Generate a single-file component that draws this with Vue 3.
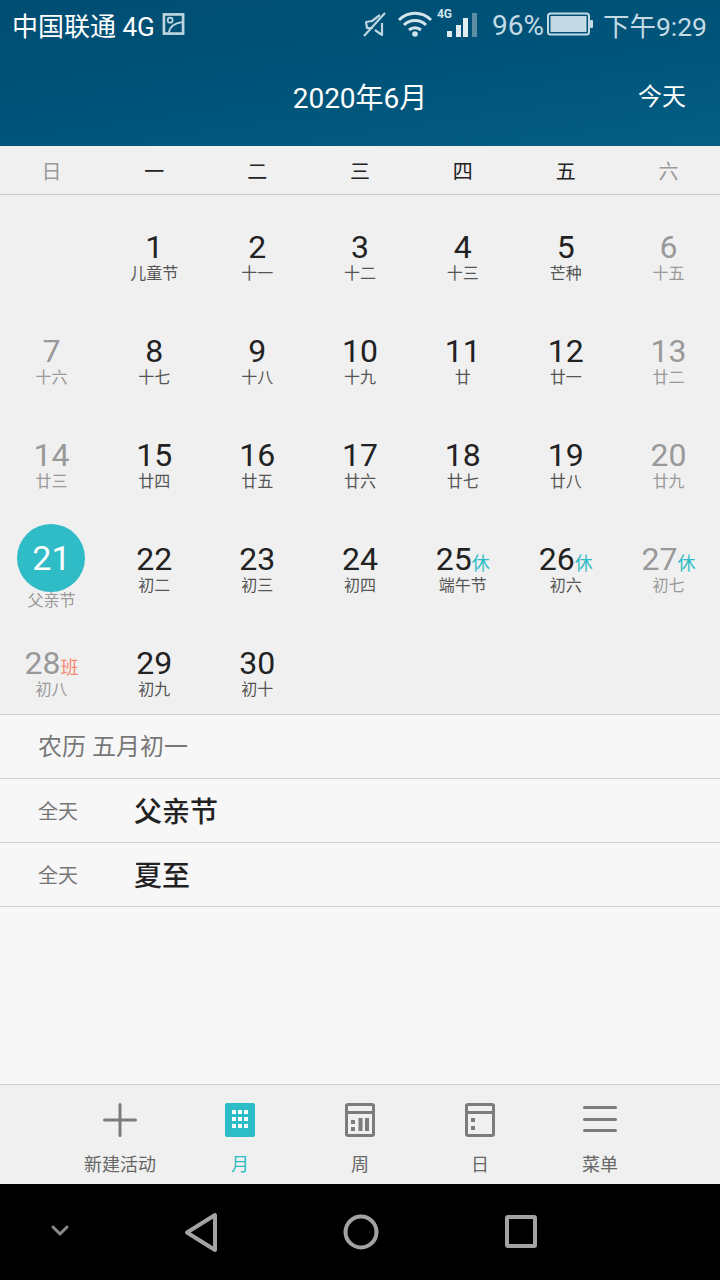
<template>
  <div class="phone">
    <header class="top">
      <div class="status">
        <div class="status-left">
          <span class="carrier">中国联通 4G</span>
          <svg class="ic-image" width="23" height="24" viewBox="0 0 24 24" fill="none" stroke="#bcd5e0" stroke-width="2.8">
            <rect x="2" y="2" width="20" height="20" />
            <circle cx="8.5" cy="8" r="2.6" stroke-width="1.8" />
            <path d="M7 21c1-6 6-10 14-11" stroke-width="2" />
          </svg>
        </div>
        <div class="status-right">
          <svg width="26" height="26" viewBox="0 0 26 26" fill="none" stroke="#bcd5e0" stroke-width="2.2">
            <path d="M21 12v12l-7-5M12 17H6l-1-6 6-1 8-6" stroke-linejoin="round" />
            <path d="M3 25L24 2" />
          </svg>
          <svg class="ic-wifi" width="36" height="26" viewBox="0 0 36 26" fill="none" stroke="#d4e4ec" stroke-width="3">
            <path d="M2 9c9-9 23-9 32 0M7 14c6-6 16-6 22 0M12 19c3.500-3 8.500-3 12 0" />
            <circle cx="18" cy="23" r="2.800" fill="#d4e4ec" stroke="none" />
          </svg>
          <div class="signal">
            <span class="net">4G</span>
            <i class="bar b1"></i><i class="bar b2"></i><i class="bar b3"></i><i class="bar b4"></i>
          </div>
          <span class="pct">96%</span>
          <svg class="ic-batt" width="46" height="24" viewBox="0 0 46 24">
            <rect x="1" y="1.500" width="41" height="21" rx="2.500" fill="none" stroke="#c4dae4" stroke-width="2" />
            <rect x="3.500" y="4" width="36" height="16" fill="#c4dae4" />
            <rect x="43" y="8" width="3" height="8" rx="1" fill="#c4dae4" />
          </svg>
          <span class="clock">下午9:29</span>
        </div>
      </div>
      <div class="toolbar">
        <span class="title">2020年6月</span>
        <span class="today-btn">今天</span>
      </div>
    </header>

    <div class="weekdays">
      <span v-for="(w, i) in weekdays" :key="w" class="wd" :class="{ off: i === 0 || i === 6 }">{{ w }}</span>
    </div>

    <div class="month">
      <div v-for="(d, i) in days" :key="i" class="cell" :class="{ dim: d.dim, selected: d.selected }">
        <template v-if="d.n">
          <div class="num-row">
            <span class="num">{{ d.n }}</span>
            <span v-if="d.tag" class="tag" :class="{ work: d.tag === '班' }">{{ d.tag }}</span>
          </div>
          <div class="lunar">{{ d.lunar }}</div>
        </template>
      </div>
    </div>

    <section class="agenda">
      <div class="row lunar-row">农历 五月初一</div>
      <div v-for="e in events" :key="e" class="row">
        <span class="allday">全天</span>
        <span class="event">{{ e }}</span>
      </div>
    </section>

    <nav class="tabs">
      <div class="tab">
        <svg width="36" height="36" viewBox="0 0 36 36" fill="#7c7c7c">
          <rect x="1" y="16.500" width="34" height="3" rx="1.500" />
          <rect x="16.500" y="1" width="3" height="34" rx="1.500" />
        </svg>
        <span class="tab-label">新建活动</span>
      </div>
      <div class="tab active">
        <svg width="36" height="36" viewBox="0 0 36 36">
          <rect x="3" y="1" width="30" height="34" rx="2" fill="#2bbcc8" />
          <g fill="#fff">
            <rect x="10" y="8" width="4" height="4" /><rect x="16" y="8" width="4" height="4" /><rect x="22" y="8" width="4" height="4" />
            <rect x="10" y="15" width="4" height="4" /><rect x="16" y="15" width="4" height="4" /><rect x="22" y="15" width="4" height="4" />
            <rect x="10" y="22" width="4" height="4" /><rect x="16" y="22" width="4" height="4" /><rect x="22" y="22" width="4" height="4" />
          </g>
        </svg>
        <span class="tab-label">月</span>
      </div>
      <div class="tab">
        <svg width="36" height="36" viewBox="0 0 36 36" fill="none" stroke="#7c7c7c" stroke-width="3">
          <rect x="4.500" y="2.500" width="27" height="31" rx="1.500" />
          <path d="M4 10.500h28" />
          <g fill="#7c7c7c" stroke="none">
            <rect x="9" y="18" width="4" height="4" /><rect x="9" y="25" width="4" height="4" />
            <rect x="16.500" y="16" width="4" height="13" /><rect x="23" y="16" width="4" height="13" />
          </g>
        </svg>
        <span class="tab-label">周</span>
      </div>
      <div class="tab">
        <svg width="36" height="36" viewBox="0 0 36 36" fill="none" stroke="#7c7c7c" stroke-width="3">
          <rect x="4.500" y="2.500" width="27" height="31" rx="1.500" />
          <path d="M4 10.500h28" />
          <g fill="#7c7c7c" stroke="none">
            <rect x="9" y="16" width="4" height="4" /><rect x="9" y="24" width="4" height="4" />
          </g>
        </svg>
        <span class="tab-label">日</span>
      </div>
      <div class="tab">
        <svg width="36" height="36" viewBox="0 0 36 36" fill="#7c7c7c">
          <rect x="1" y="4" width="34" height="3" rx="1.500" />
          <rect x="1" y="16" width="34" height="3" rx="1.500" />
          <rect x="1" y="27" width="34" height="3" rx="1.500" />
        </svg>
        <span class="tab-label">菜单</span>
      </div>
    </nav>

    <footer class="nav">
      <svg width="720" height="96" viewBox="0 0 720 96" fill="none" stroke="#a3a3a3" stroke-width="4" stroke-linejoin="round" stroke-linecap="round">
        <path d="M53 43l7 7 7-7" stroke="#8a8a8a" stroke-width="3" />
        <path d="M215 31v35l-28-17.500z" />
        <circle cx="361" cy="48" r="15.500" />
        <rect x="507" y="33" width="28" height="29" rx="1" />
      </svg>
    </footer>
  </div>
</template>

<script setup>
const weekdays = ['日', '一', '二', '三', '四', '五', '六']
const events = ['父亲节', '夏至']

const lunar = [
  '儿童节', '十一', '十二', '十三', '芒种', '十五', '十六', '十七', '十八', '十九',
  '廿', '廿一', '廿二', '廿三', '廿四', '廿五', '廿六', '廿七', '廿八', '廿九',
  '父亲节', '初二', '初三', '初四', '端午节', '初六', '初七', '初八', '初九', '初十',
]
const tags = { 25: '休', 26: '休', 27: '休', 28: '班' }

// june 2020 starts on a monday, so one empty cell first
const days = [{}]
lunar.forEach((text, i) => {
  const n = i + 1
  const col = (n % 7)
  days.push({
    n,
    lunar: text,
    tag: tags[n],
    dim: col === 0 || col === 6,
    selected: n === 21,
  })
})
while (days.length < 35) days.push({})
</script>

<style scoped>
.phone {
  width: 720px;
  height: 1280px;
  display: flex;
  flex-direction: column;
  overflow: hidden;
  background: #f0f0f0;
  font-family: Roboto, "Noto Sans CJK SC", sans-serif;
  color: #222;
}

.top {
  height: 146px;
  background: linear-gradient(172deg, #004d72 0%, #00547a 55%, #055e83 100%);
}

.status {
  height: 48px;
  display: flex;
  justify-content: space-between;
  align-items: center;
  padding: 0 13px 0 12px;
  font-size: 26px;
}

.status-left,
.status-right {
  display: flex;
  align-items: center;
}

.carrier {
  color: #fff;
}

.ic-image {
  margin-left: 7px;
}

.status-right {
  color: #c4dae4;
}

.ic-wifi {
  margin-left: 10px;
}

.signal {
  position: relative;
  width: 40px;
  height: 32px;
  margin-left: 4px;
}

.net {
  position: absolute;
  left: 0;
  top: 0;
  font-size: 12px;
  line-height: 12px;
  font-weight: 700;
  color: #d4e4ec;
}

.bar {
  position: absolute;
  bottom: 3px;
  width: 5px;
  background: #e2edf2;
}

.b1 { left: 10px; height: 6px; }
.b2 { left: 19px; height: 12px; }
.b3 { left: 26px; height: 19px; }
.b4 { left: 35px; height: 24px; background: #5d8ea6; }

.pct {
  margin-left: 15px;
  padding-top: 3px;
  font-size: 28px;
}

.ic-batt {
  margin-left: 3px;
}

.clock {
  margin-left: 10px;
  font-size: 26.500px;
}

.toolbar {
  position: relative;
  height: 98px;
  display: flex;
  align-items: center;
  justify-content: center;
  padding-bottom: 2px;
  box-sizing: border-box;
  color: #fff;
}

.title {
  font-size: 28px;
}

.today-btn {
  position: absolute;
  right: 34px;
  top: 34px;
  font-size: 24px;
  line-height: 30px;
}

.weekdays {
  height: 48px;
  display: grid;
  grid-template-columns: repeat(7, 1fr);
  align-items: center;
  border-bottom: 1px solid #c8c8c8;
  box-sizing: content-box;
  font-size: 20px;
}

.wd {
  text-align: center;
  color: #222;
}

.wd.off {
  color: #999;
}

.month {
  height: 519px;
  display: grid;
  grid-template-columns: repeat(7, 1fr);
  grid-template-rows: repeat(5, 104px);
  border-bottom: 1px solid #cfcfcf;
}

.cell {
  padding-top: 34px;
  text-align: center;
  box-sizing: border-box;
}

.num-row {
  display: flex;
  justify-content: center;
  align-items: baseline;
  height: 36px;
  line-height: 36px;
}

.num {
  font-size: 32px;
}

.tag {
  font-size: 18px;
  line-height: 18px;
  color: #2fbcc6;
}

.tag.work {
  color: #f58a72;
}

.lunar {
  margin-top: 1px;
  font-size: 16px;
  line-height: 16px;
  color: #555;
}

.dim .num,
.dim .lunar {
  color: #999;
}

.selected {
  padding-top: 17px;
}

.selected .num-row {
  width: 68px;
  height: 68px;
  margin: 0 auto;
  align-items: center;
  border-radius: 50%;
  background: #2fbcc6;
}

.selected .num {
  color: #fff;
  font-size: 34px;
}

.selected .lunar {
  color: #999;
}

.agenda {
  height: 369px;
  background: #f7f7f7;
  border-bottom: 1px solid #cfcfcf;
  box-sizing: content-box;
}

.row {
  height: 64px;
  box-sizing: border-box;
  display: flex;
  align-items: center;
  padding-left: 38px;
  border-bottom: 1px solid #cfcfcf;
}

.lunar-row {
  padding-bottom: 4px;
  font-size: 24px;
  color: #777;
}

.allday {
  width: 96px;
  font-size: 20px;
  color: #777;
}

.event {
  padding-bottom: 2px;
  font-size: 28px;
  font-weight: 500;
  color: #222;
}

.tabs {
  height: 99px;
  display: grid;
  grid-template-columns: repeat(5, 120px);
  padding: 0 60px;
  background: #f0f0f0;
}

.tab {
  display: flex;
  flex-direction: column;
  align-items: center;
  padding-top: 17px;
  gap: 15px;
}

.tab-label {
  font-size: 18px;
  line-height: 24px;
  color: #666;
}

.active .tab-label {
  color: #2fbcc6;
}

.nav {
  height: 96px;
  background: #000;
}

.nav svg {
  display: block;
}
</style>

<style>
body {
  margin: 0;
  background: #f0f0f0;
}
</style>
